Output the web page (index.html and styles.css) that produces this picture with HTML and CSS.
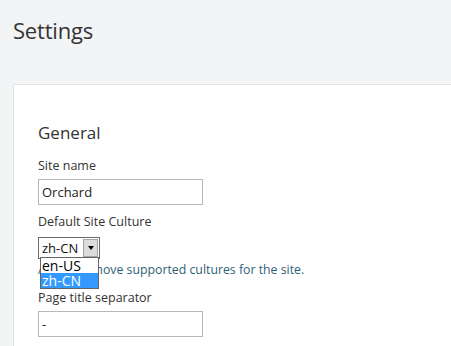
FILE: index.html
```html
<!DOCTYPE html>
<html lang="en">
<head>
    <meta charset="UTF-8">
    <title>Settings</title>
    <link rel="stylesheet" href="styles.css">
</head>
<body>
    <header class="page-header">
        <h1>Settings</h1>
    </header>
    <main class="card">
        <h2>General</h2>
        <div class="field">
            <label>Site name</label>
            <div class="text-input">Orchard</div>
        </div>
        <div class="field">
            <label>Default Site Culture</label>
            <div class="select-wrap">
                <div class="select">
                    <span class="select-value">zh-CN</span>
                    <span class="select-btn"><span class="arrow"></span></span>
                </div>
                <ul class="dropdown">
                    <li>en-US</li>
                    <li class="selected">zh-CN</li>
                </ul>
            </div>
            <p class="hint">Add or remove supported cultures for the site.</p>
        </div>
        <div class="field">
            <label>Page title separator</label>
            <div class="text-input">-</div>
        </div>
    </main>
</body>
</html>
```

FILE: styles.css
```css
body {
    font-family: 'Open Sans', 'Noto Sans', Arial, sans-serif;
    margin: 0;
    padding: 0 0 0 13px;
    background-color: #f3f4f6;
    color: #333;
    overflow: hidden;
    height: 346px;
}
.page-header h1 {
    margin: 0;
    padding: 15px 0 0;
    font-weight: 400;
    font-size: 22px;
    line-height: 30px;
    color: #333;
    letter-spacing: -0.2px;
}
.card {
    margin-top: 39px;
    background-color: #fff;
    border: 1px solid #e3e3e3;
    border-right: none;
    border-bottom: none;
    padding: 36px 0 0 24px;
    height: 240px;
}
.card h2 {
    margin: 0 0 12px;
    font-weight: 400;
    font-size: 17px;
    line-height: 24px;
    color: #333;
}
.field {
    margin-bottom: 8px;
}
.field label {
    display: block;
    font-size: 12.5px;
    line-height: 18px;
    margin-bottom: 4px;
    color: #333;
}
.text-input {
    width: 157px;
    height: 24px;
    border: 1px solid #b8b8b8;
    padding: 0 3px;
    font-size: 13px;
    line-height: 24px;
    color: #222;
}
.select-wrap {
    position: relative;
    height: 22px;
    margin-top: 5px;
}
.select {
    display: inline-flex;
    align-items: center;
    width: 60px;
    height: 20px;
    border: 1px solid #6b6b6b;
    background: #fff;
}
.select-value {
    flex: 1;
    font-size: 13px;
    line-height: 20px;
    padding-left: 3px;
    color: #111;
}
.select-btn {
    display: flex;
    align-items: center;
    justify-content: center;
    width: 13px;
    height: 16px;
    margin-right: 1px;
    background: #dcdcdc;
    border: 1px solid #a5a5a5;
}
.arrow {
    width: 0;
    height: 0;
    border-left: 3.5px solid transparent;
    border-right: 3.5px solid transparent;
    border-top: 4px solid #000;
}
.dropdown {
    position: absolute;
    left: 2px;
    top: 21px;
    width: 57px;
    margin: 0;
    padding: 0;
    list-style: none;
    background: #fff;
    border: 1px solid #646464;
    font-size: 14px;
    line-height: 15px;
    z-index: 2;
}
.dropdown li {
    padding-left: 1px;
    color: #000;
}
.dropdown li.selected {
    background: #3399ff;
    color: #fff;
}
.hint {
    margin: 3px 0 0;
    padding-bottom: 2px;
    font-size: 12.3px;
    line-height: 18px;
    color: #2f5f77;
}
```
